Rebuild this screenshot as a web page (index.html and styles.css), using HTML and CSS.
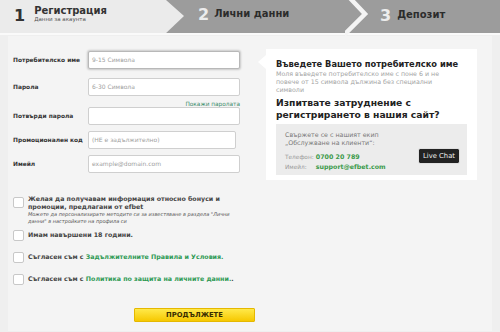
FILE: index.html
```html
<!DOCTYPE html>
<html lang="bg">
<head>
<meta charset="utf-8">
<link rel="stylesheet" href="styles.css">
</head>
<body>
<header class="steps">
  <div class="step step1">
    <span class="num">1</span>
    <div class="step-text">
      <div class="title">Регистрация</div>
      <div class="sub">Данни за акаунта</div>
    </div>
  </div>
  <div class="step step2">
    <span class="num light">2</span>
    <span class="title">Лични данни</span>
  </div>
  <div class="step step3">
    <svg class="chev" width="30" height="38" viewBox="0 0 30 38"><polyline points="3,-2 20,16 -2,38" fill="none" stroke="#f4f4f4" stroke-width="4.5"/></svg>
    <span class="num light">3</span>
    <span class="title">Депозит</span>
  </div>
</header>

<main class="page">
  <div class="top">
    <form class="form">
      <div class="row">
        <label class="lbl">Потребителско име</label>
        <div class="field focus">9-15 Символа</div>
      </div>
      <div class="row">
        <label class="lbl">Парола</label>
        <div class="field">6-30 Символа</div>
      </div>
      <div class="show"><a>Покажи паролата</a></div>
      <div class="row r3">
        <label class="lbl">Потвърди парола</label>
        <div class="field"></div>
      </div>
      <div class="row">
        <label class="lbl">Промоционален код</label>
        <div class="field narrow">(НЕ е задължително)</div>
      </div>
      <div class="row">
        <label class="lbl">Имейл</label>
        <div class="field">example@domain.com</div>
      </div>
    </form>

    <aside class="panel">
      <h3 class="h1">Въведете Вашето потребителско име</h3>
      <p class="desc">Моля въведете потребителско име с поне 6 и не повече от 15 символа дължина без специални символи</p>
      <h3 class="h2">Изпитвате затруднение с регистрирането в нашия сайт?</h3>
      <div class="contact">
        <div class="contact-info">
          <p class="team">Свържете се с нашият екип „Обслужване на клиенти“:</p>
          <p class="line"><span class="k">Телефон:</span> <b class="g">0700 20 789</b></p>
          <p class="line"><span class="k">Имейл:</span> <b class="g">support@efbet.com</b></p>
        </div>
        <span class="chat">Live Chat</span>
      </div>
    </aside>
  </div>

  <div class="checks">
    <div class="check c1">
      <span class="box"></span>
      <div>
        <p class="ct">Желая да получавам информация относно бонуси и промоции, предлагани от efbet</p>
        <p class="note">Можете да персонализирате методите си за известяване в раздела "Лични данни" в настройките на профила си</p>
      </div>
    </div>
    <div class="check">
      <span class="box"></span>
      <p class="ct">Имам навършени 18 години.</p>
    </div>
    <div class="check">
      <span class="box"></span>
      <p class="ct">Съгласен съм с <a class="lnk">Задължителните Правила и Условия.</a></p>
    </div>
    <div class="check">
      <span class="box"></span>
      <p class="ct">Съгласен съм с <a class="lnk">Политика по защита на личните данни.</a>.</p>
    </div>
  </div>

  <div class="actions">
    <button class="btn" type="button">ПРОДЪЛЖЕТЕ</button>
  </div>
</main>
</body>
</html>
```

FILE: styles.css
```css
* { box-sizing: border-box; }
html, body { margin: 0; padding: 0; }
body {
  width: 500px;
  height: 332px;
  overflow: hidden;
  background: #efefef;
  font-family: "DejaVu Sans", Verdana, sans-serif;
  color: #333;
}
p, h3 { margin: 0; }

/* header steps */
.steps {
  display: flex;
  height: 35px;
  background: #9c9c9c;
  border-bottom: 2px solid #fafafa;
}
.step {
  display: flex;
  align-items: flex-start;
  position: relative;
}
.step1 {
  width: 185px;
  background: #ebebeb;
  clip-path: polygon(0 0, 166px 0, 184px 16px, 164px 35px, 0 35px);
  padding: 5px 0 0 14px;
  gap: 9px;
}
.step2 {
  width: 160px;
  padding: 6px 0 0 13px;
  gap: 5px;
}
.step3 {
  flex: 1;
  padding: 6px 0 0 35px;
  gap: 6px;
}
.chev {
  position: absolute;
  left: 0;
  top: -2px;
}
.num {
  font-size: 16px;
  font-weight: bold;
  line-height: 18px;
  color: #333;
}
.num.light { color: #ececec; }
.step1 .num { margin-top: 2px; }
.step3 .num { margin-top: 1px; }
.title {
  font-size: 10px;
  font-weight: bold;
  line-height: 11px;
  color: #333;
}
.step2 .title, .step3 .title { margin-top: 2px; color: #2c2c2c; }
.step3 .title { margin-top: 3px; }
.sub {
  font-size: 5.5px;
  color: #555;
  line-height: 7px;
}

/* page */
.page {
  background: #f4f4f4;
  margin: 1px 8px 0;
  padding: 15px 0 0 5px;
  height: 295px;
}
.top {
  display: flex;
  gap: 18px;
}
.form {
  width: 235px;
  display: flex;
  flex-direction: column;
}
.row {
  display: flex;
  align-items: center;
  margin-bottom: 9px;
}
.row.r3 { margin-bottom: 6px; }
.row:last-child { margin-bottom: 0; }
.form .row:nth-child(4), .form .row:nth-child(5) { margin-bottom: 6px; }
.lbl {
  width: 75px;
  font-size: 5.9px;
  font-weight: bold;
  color: #333;
  white-space: nowrap;
}
.field {
  width: 152px;
  height: 18px;
  background: #fff;
  border: 1px solid #cfcfcf;
  border-radius: 2px;
  font-size: 6px;
  color: #a0a0a0;
  padding: 0 3px;
  line-height: 16px;
}
.field.focus {
  border-color: #b8b8b8;
  box-shadow: 0 0 2px 1px rgba(0,0,0,0.18);
}
.field.narrow { width: 148px; }
.show {
  text-align: right;
  width: 227px;
  margin: -9px 0 2px;
  height: 9px;
  line-height: 9px;
}
.show a {
  font-size: 5.8px;
  color: #3c8c6c;
}

/* panel */
.panel {
  position: relative;
  width: 211px;
  height: 131px;
  margin-top: -2px;
  background: #fff;
  padding: 10px 10px 0 10px;
}
.panel::before {
  content: "";
  position: absolute;
  left: -8px;
  top: 6px;
  border-style: solid;
  border-width: 7px 8px 7px 0;
  border-color: transparent #fff transparent transparent;
}
.h1 {
  font-size: 8.3px;
  font-weight: bold;
  line-height: 10px;
  color: #222;
}
.desc {
  font-size: 6.3px;
  line-height: 8px;
  color: #a3a3a3;
  margin-top: 1px;
  width: 185px;
}
.h2 {
  font-size: 9.2px;
  font-weight: bold;
  line-height: 12px;
  color: #222;
  margin-top: 3px;
  width: 185px;
}
.contact {
  margin-top: 3px;
  background: #ececec;
  width: 191px;
  height: 51px;
  padding: 7px 8px 0 9px;
  display: flex;
  justify-content: space-between;
}
.team {
  font-size: 6.3px;
  line-height: 8px;
  color: #777;
  width: 110px;
}
.line {
  font-size: 5.8px;
  line-height: 9px;
  color: #999;
}
.contact-info .line:nth-child(2) { margin-top: 5px; }
.k { display: inline-block; width: 29px; }
.g { color: #3a9a4a; font-size: 6.3px; }
.chat {
  align-self: flex-start;
  margin-top: 18px;
  background: #222;
  color: #f2f2f2;
  font-size: 6.8px;
  padding: 0 4px;
  height: 14px;
  line-height: 14px;
  border-radius: 1px;
  outline: 1px solid #e0e0e0;
}

/* checkboxes */
.checks {
  margin-top: 15px;
  display: flex;
  flex-direction: column;
  gap: 10px;
}
.check {
  display: flex;
  align-items: flex-start;
  gap: 4px;
}
.check.c1 { margin-bottom: -6px; }
.box {
  flex: none;
  width: 11px;
  height: 11px;
  background: #fff;
  border: 1px solid #c8c8c8;
  border-radius: 2px;
  margin-top: 1px;
}
.c1 .box { margin-top: 2px; }
.ct {
  font-size: 6.3px;
  font-weight: bold;
  line-height: 8px;
  color: #444;
  width: 210px;
  padding-top: 2px;
}
.c1 .ct { padding-top: 0; width: 195px; }
.note {
  font-size: 5px;
  font-style: italic;
  line-height: 7px;
  color: #555;
  width: 212px;
}
.lnk { color: #2f9a55; }

.actions {
  margin-top: 17px;
  padding-left: 121px;
}
.btn {
  width: 121px;
  height: 14px;
  border: 1px solid #e5b800;
  border-radius: 1px;
  background: linear-gradient(#ffe94a, #f6c800);
  font-family: "DejaVu Sans", Verdana, sans-serif;
  font-size: 6.8px;
  font-weight: bold;
  color: #3a2e00;
  padding: 0;
  line-height: 12px;
}
```
